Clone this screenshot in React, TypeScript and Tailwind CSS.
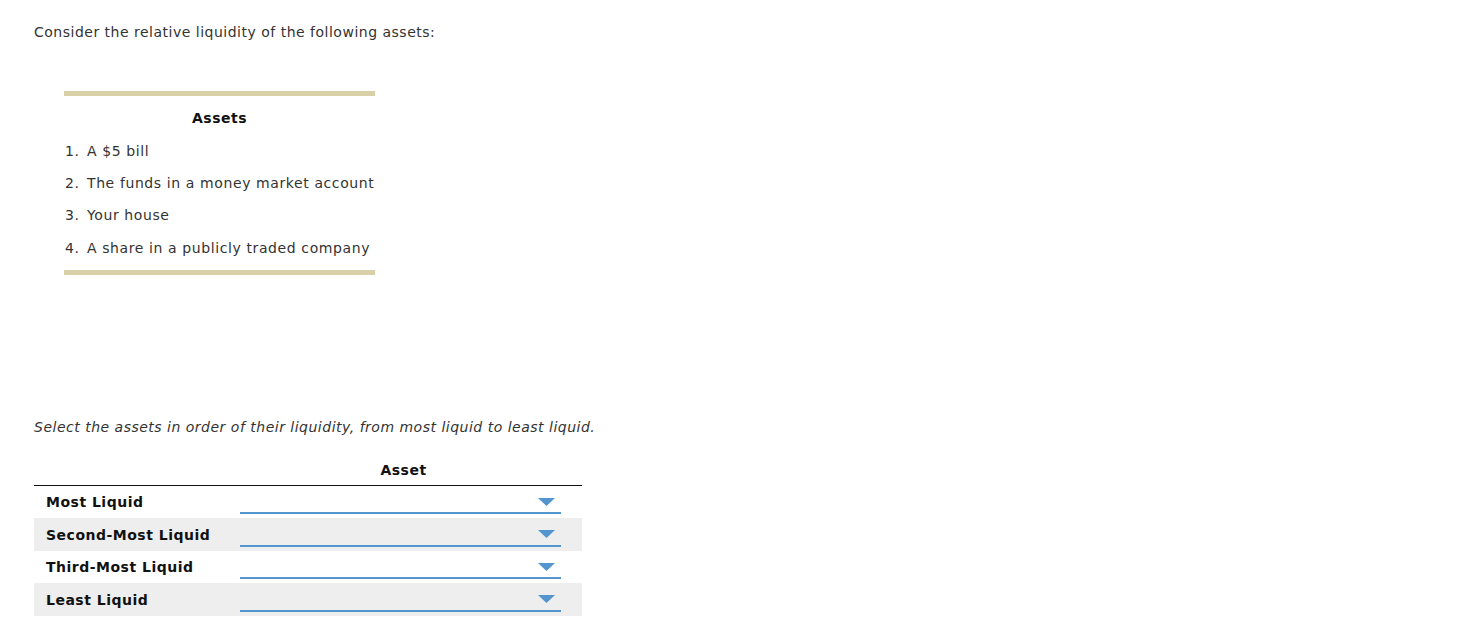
import React from "react";

const font = { fontFamily: '"DejaVu Sans", Verdana, sans-serif' };

function Dropdown() {
  return (
    <div className="relative w-[321px] h-[32.5px] flex items-end">
      <div className="w-full h-[2px] bg-[#5494cf] mb-[4px]" />
      <svg
        className="absolute right-[6px] top-[12px]"
        width="17"
        height="8"
        viewBox="0 0 17 8"
      >
        <polygon points="0,0 17,0 8.5,8" fill="#5494cf" />
      </svg>
    </div>
  );
}

export default function App() {
  const rows = ["Most Liquid", "Second-Most Liquid", "Third-Most Liquid", "Least Liquid"];
  const items = [
    "A $5 bill",
    "The funds in a money market account",
    "Your house",
    "A share in a publicly traded company",
  ];
  return (
    <div
      className="bg-white w-[1482px] h-[633px] text-[#333] text-[14px] tracking-[0.5px] pl-[34px] pt-[23px]"
      style={font}
    >
      <p className="leading-[18px]">Consider the relative liquidity of the following assets:</p>

      <div className="ml-[30px] mt-[50px] w-[311px]">
        <div className="h-[5px] bg-[#dad0a7]" />
        <div className="text-center font-bold text-[#111] leading-[18px] mt-[13px]">Assets</div>
        <ol className="mt-[8px]">
          {items.map((t, i) => (
            <li key={i} className="flex h-[32.4px] items-center pl-[1px]">
              <span className="w-[22px]">{i + 1}.</span>
              <span className="tracking-[0.6px]">{t}</span>
            </li>
          ))}
        </ol>
        <div className="h-[5px] bg-[#dad0a7] mt-[5px]" />
      </div>

      <p className="italic leading-[18px] mt-[143px]">
        Select the assets in order of their liquidity, from most liquid to least liquid.
      </p>

      <div className="w-[548px] mt-[25px]">
        <div className="flex border-b border-[#111] h-[25px]">
          <div className="w-[206px]" />
          <div className="w-[327px] text-center font-bold text-[#111] leading-[18px]">Asset</div>
        </div>
        {rows.map((r, i) => (
          <div
            key={r}
            className={`flex items-stretch h-[32.5px] ${i % 2 === 1 ? "bg-[#eeeeee]" : "bg-white"}`}
          >
            <div className="w-[206px] pl-[12px] pt-[2px] flex items-center font-bold text-[#111]">{r}</div>
            <Dropdown />
          </div>
        ))}
      </div>
    </div>
  );
}
